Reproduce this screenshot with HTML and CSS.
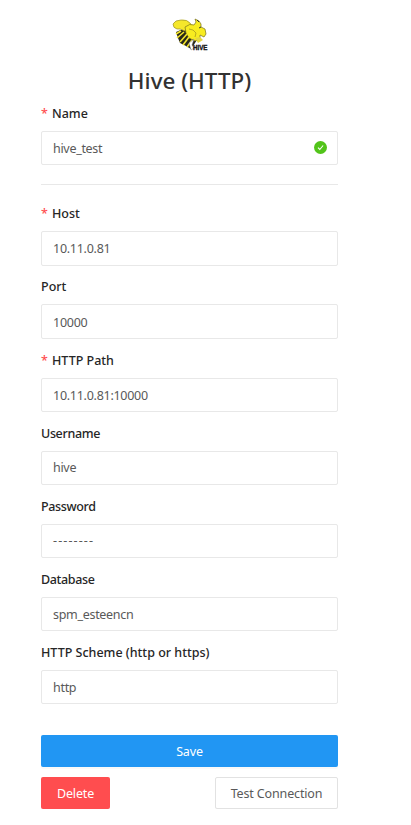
FILE: index.html
```html
<!DOCTYPE html>
<html lang="en">
<head>
<meta charset="utf-8">
<title>Hive (HTTP)</title>
<link rel="stylesheet" href="styles.css">
</head>
<body>
<main class="page">
  <header class="header">
    <svg class="logo" viewBox="0 0 38 36" aria-hidden="true">
      <path d="M4 14 11 11 18 12 19 19 25 22 19 31 14 28 8 25 6 20Z" fill="#272719"/>
      <path d="M1 6Q3 2 9 2Q15 1 19 6L20 10Q15 9 13 13L8 11 5 11Q1 10 1 6Z" fill="#f5e72b" stroke="#99902a" stroke-width=".7"/>
      <path d="M13 9Q18 5 22 7L24 4 23 1 27 3 29 6 29 9 33 11 34 16 32 19 28 17 28 21 23 23 17 20 14 15Z" fill="#f8ec20" stroke="#77701e" stroke-width=".7"/>
      <path d="M4 16 9 13M5 20 12 14M8 24 15 16M11 27 17 19M15 29 20 22" fill="none" stroke="#f4e52b" stroke-width="1.6"/>
      <path d="M17 11 21 12 24 15 23 19" fill="none" stroke="#a89d20" stroke-width=".8"/>
      <path d="m23 20 5-1 3 3-5 3Z" fill="#e4d73f"/>
      <path d="m17 25 5-4-2 6 2 3-3 2Z" fill="#fff" stroke="#777" stroke-width=".5"/>
      <path d="m25 2 2 2M27 10l2-1" stroke="#333" fill="none"/>
      <text class="logo-text" x="21" y="32" textLength="14.5" lengthAdjust="spacingAndGlyphs">HIVE</text>
    </svg>
    <h1 class="title">Hive (HTTP)</h1>
  </header>
  <form class="form">
    <div class="field field-name">
      <div class="label required">Name</div>
      <div class="input">hive_test
        <svg class="check" viewBox="0 0 13 13" aria-hidden="true"><circle cx="6.5" cy="6.5" r="6.5" fill="#52c41a"/><path d="m4 6.6 1.8 1.9 3.3-4" fill="none" stroke="#fff" stroke-width="1.1"/></svg>
      </div>
    </div>
    <hr class="divider">
    <div class="field"><div class="label required">Host</div><div class="input digits">10.11.0.81</div></div>
    <div class="field"><div class="label">Port</div><div class="input digits">10000</div></div>
    <div class="field"><div class="label required">HTTP Path</div><div class="input digits">10.11.0.81:10000</div></div>
    <div class="field"><div class="label tight">Username</div><div class="input">hive</div></div>
    <div class="field"><div class="label tight">Password</div><div class="input dashes">--------</div></div>
    <div class="field"><div class="label tight">Database</div><div class="input">spm_esteencn</div></div>
    <div class="field"><div class="label">HTTP Scheme (http or https)</div><div class="input">http</div></div>
    <button class="button save" type="button">Save</button>
    <div class="actions">
      <button class="button delete" type="button">Delete</button>
      <button class="button test" type="button">Test Connection</button>
    </div>
  </form>
</main>
</body>
</html>
```
FILE: styles.css
```css
* { box-sizing: border-box; }
body { margin: 0; background: #fff; font: 13px/19px "Noto Sans", "Open Sans", sans-serif; color: #595959; }
.page { width: 297px; margin-left: 41px; padding-top: 18px; }
.header { display: flex; flex-direction: column; align-items: center; height: 86px; }
.logo { width: 38px; height: 36px; margin-left: 2px; }
.logo-text { font: 900 7px "Liberation Sans", sans-serif; fill: #181818; stroke: #181818; stroke-width: .4px; }
.title { margin: 11px 0 0; font-size: 22.4px; line-height: 32px; font-weight: 500; color: #323232; white-space: nowrap; }
.field { height: 73.2px; }
.field-name { height: 80px; }
.label { height: 27px; color: #262626; font-size: 12.5px; font-weight: 500; white-space: nowrap; }
.tight { letter-spacing: -.34px; }
.required::before { content: "*"; display: inline-block; width: 11px; color: #ff4d4f; }
.input { display: flex; align-items: center; height: 34px; padding: 0 10px 0 11px; border: 1px solid #e8e8e8; border-radius: 2px; font-size: 12.5px; letter-spacing: -.3px; }
.digits { height: 34.4px; padding-top: 1px; letter-spacing: -.27px; }
.dashes { letter-spacing: 1.1px; }
.check { width: 13px; height: 13px; margin-left: auto; margin-top: -2px; }
.divider { height: 1px; margin: 0 0 19.2px; border: 0; background: #e8e8e8; }
.button { height: 32px; padding: 1px 0 0; border: 0; border-radius: 2px; color: #fff; font: inherit; font-size: 12.5px; letter-spacing: -.15px; box-shadow: 0 2px 0 rgba(0,0,0,.025); }
.save { display: block; width: 100%; margin-top: 18.4px; background: #2196f3; }
.actions { display: flex; justify-content: space-between; margin-top: 10px; }
.delete { width: 69px; background: #ff4d4f; }
.test { width: 123px; border: 1px solid #e2e2e2; background: #fff; color: #595959; }
```
